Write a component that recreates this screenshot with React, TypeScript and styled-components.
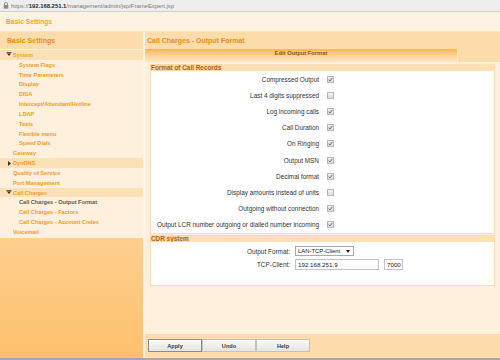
import React from "react";
import styled, { createGlobalStyle } from "styled-components";

const Global = createGlobalStyle`
  html, body { margin: 0; padding: 0; }
  body {
    width: 500px; height: 360px; overflow: hidden;
    font-family: "Liberation Sans", Arial, sans-serif;
    background: #fef0dc;
  }
  * { box-sizing: border-box; }
`;

const Page = styled.div`
  width: 500px;
  height: 360px;
  display: flex;
  flex-direction: column;
`;

const UrlBar = styled.div`
  height: 12px;
  flex: none;
  background: #eeeeee;
  border-bottom: 1px solid #c9d2dc;
  display: flex;
  align-items: center;
  padding-left: 3px;
  gap: 2px;
`;

const Url = styled.span`
  font-size: 5.9px;
  color: #7a7a7a;
  white-space: nowrap;
  b { color: #2a2a2a; font-weight: bold; }
`;

const TopHeader = styled.div`
  height: 20px;
  flex: none;
  background: #fef2e2;
  border-bottom: 1px solid #fde3c0;
  display: flex;
  align-items: center;
  padding-left: 6px;
  font-size: 6.7px;
  font-weight: bold;
  color: #f7a430;
`;

const Body = styled.div`
  flex: 1;
  display: flex;
  min-height: 0;
`;

const Sidebar = styled.div`
  width: 145px;
  flex: none;
  display: flex;
  flex-direction: column;
  border-right: 2px solid #fef3e4;
`;

const HeaderBar = styled.div`
  height: 17px;
  flex: none;
  background: #fddcab;
  display: flex;
  align-items: center;
  font-size: 7px;
  font-weight: bold;
  color: #f28a14;
`;

const SideHeader = styled(HeaderBar)`
  padding-left: 7px;
`;

const Menu = styled.div`
  background: #fef0dc;
  padding-top: 1px;
  padding-bottom: 1px;
  flex: none;
`;

const MenuItem = styled.div<{ $level: number; $group?: boolean; $active?: boolean }>`
  height: 9.83px;
  display: flex;
  align-items: center;
  padding-left: ${(p) => (p.$level === 2 ? 19 : p.$group ? 6 : 13)}px;
  background: ${(p) => (p.$group ? "#fde1b6" : "transparent")};
  font-size: 5.6px;
  font-weight: bold;
  color: ${(p) => (p.$active ? "#6a5638" : "#f39a24")};
  white-space: nowrap;
`;

const Arrow = styled.span`
  display: inline-block;
  width: 7px;
  height: 5px;
  svg { display: block; }
`;

const SideFill = styled.div`
  flex: 1;
  background: linear-gradient(#fecf8f, #fec06c);
`;

const Main = styled.div`
  flex: 1;
  display: flex;
  flex-direction: column;
  min-width: 0;
`;

const MainTitle = styled(HeaderBar)`
  padding-left: 2px;
`;

const TabRow = styled.div`
  height: 13px;
  flex: none;
  background: #fddcab;
  display: flex;
`;

const Tab = styled.div`
  width: 313px;
  background: linear-gradient(#fdb356, #fed49a 55%, #fee8c8);
  border-right: 1px solid #fde8cc;
  display: flex;
  justify-content: center;
  padding-top: 1px;
  font-size: 5.8px;
  font-weight: bold;
  color: #8c5a14;
`;

const Content = styled.div`
  flex: 1;
  background: #fef0dc;
  padding: 2px 5px 0 5px;
  display: flex;
  flex-direction: column;
  gap: 1px;
`;

const Fieldset = styled.div`
  display: flex;
  flex-direction: column;
`;

const LegendBand = styled.div`
  height: 7px;
  background: #fde0b6;
  display: flex;
`;

const Legend = styled.span`
  background: #fdd7a2;
  font-size: 6.4px;
  font-weight: bold;
  color: #a8651a;
  line-height: 7px;
  padding: 0 1px 0 1px;
  white-space: nowrap;
`;

const FieldBody = styled.div<{ $labelWidth: number; $rowHeight: number; $pad: string }>`
  background: #ffffff;
  border: 1px solid #fddcb2;
  border-top: none;
  display: grid;
  grid-template-columns: ${(p) => p.$labelWidth}px 1fr;
  grid-auto-rows: ${(p) => p.$rowHeight}px;
  padding: ${(p) => p.$pad};
  align-items: center;
`;

const Label = styled.span`
  font-size: 6.4px;
  color: #333333;
  text-align: right;
  white-space: nowrap;
`;

const CheckCell = styled.div`
  padding-left: 8px;
  display: flex;
  align-items: center;
`;

const Box = styled.span`
  width: 7px;
  height: 7px;
  border: 1px solid #b9b9bd;
  background: linear-gradient(#f2f2f2, #dcdce0);
  display: flex;
  align-items: center;
  justify-content: center;
  svg { display: block; }
`;

const CtrlCell = styled.div`
  padding-left: 5px;
  display: flex;
  align-items: center;
  gap: 5px;
`;

const Select = styled.div`
  width: 59px;
  height: 10px;
  border: 1px solid #a9a9a9;
  background: #fff;
  display: flex;
  align-items: center;
  justify-content: space-between;
  padding: 0 3px 0 2px;
  font-size: 5.9px;
  color: #222;
  white-space: nowrap;
`;

const Input = styled.div<{ $w: number }>`
  width: ${(p) => p.$w}px;
  height: 11px;
  border: 1px solid #c4c4c4;
  background: #fff;
  display: flex;
  align-items: center;
  padding-left: 2px;
  font-size: 6.2px;
  color: #222;
`;

const ButtonBar = styled.div`
  height: 24px;
  flex: none;
  background: #fddcab;
  display: flex;
  align-items: center;
  padding-left: 3px;
  padding-bottom: 1px;
`;

const Button = styled.div<{ $primary?: boolean }>`
  width: 54px;
  height: 13px;
  border: 1px solid ${(p) => (p.$primary ? "#8c8c8c" : "#c2c2c2")};
  background: linear-gradient(#fafafa, #e4e4e4);
  display: flex;
  align-items: center;
  justify-content: center;
  font-size: 5.6px;
  font-weight: bold;
  color: #3a3a3a;
`;

const BottomLine = styled.div`
  height: 2px;
  flex: none;
  background: #a8a8a8;
`;

const Lock = () => (
  <svg width="6" height="7" viewBox="0 0 6 7">
    <path d="M1.5 3V2a1.5 1.5 0 0 1 3 0v1" fill="none" stroke="#8a8a8a" strokeWidth="0.9" />
    <rect x="0.7" y="3" width="4.6" height="3.6" fill="#8a8a8a" />
  </svg>
);

const Tri = ({ open }: { open: boolean }) => (
  <Arrow>
    <svg width="7" height="5" viewBox="0 0 7 5">
      {open ? (
        <>
          <rect x="0.5" y="0.3" width="5" height="1" fill="#333" />
          <path d="M1 1.5h4L3 4z" fill="#333" />
        </>
      ) : (
        <path d="M2 0v5l3-2.5z" fill="#333" />
      )}
    </svg>
  </Arrow>
);

const Check = () => (
  <svg width="5" height="5" viewBox="0 0 5 5">
    <path d="M0.8 2.6l1.2 1.4L4.3 0.8" fill="none" stroke="#4e5f96" strokeWidth="0.9" />
  </svg>
);

type Item = { label: string; level: number; group?: "open" | "closed"; active?: boolean };

const menu: Item[] = [
  { label: "System", level: 0, group: "open" },
  { label: "System Flags", level: 2 },
  { label: "Time Parameters", level: 2 },
  { label: "Display", level: 2 },
  { label: "DISA", level: 2 },
  { label: "Intercept/Attendant/Hotline", level: 2 },
  { label: "LDAP", level: 2 },
  { label: "Texts", level: 2 },
  { label: "Flexible menu", level: 2 },
  { label: "Speed Dials", level: 2 },
  { label: "Gateway", level: 1 },
  { label: "DynDNS", level: 0, group: "closed" },
  { label: "Quality of Service", level: 1 },
  { label: "Port Management", level: 1 },
  { label: "Call Charges", level: 0, group: "open" },
  { label: "Call Charges - Output Format", level: 2, active: true },
  { label: "Call Charges - Factors", level: 2 },
  { label: "Call Charges - Account Codes", level: 2 },
  { label: "Voicemail", level: 1 },
];

const options: [string, boolean][] = [
  ["Compressed Output", true],
  ["Last 4 digits suppressed", false],
  ["Log incoming calls", true],
  ["Call Duration", true],
  ["On Ringing", true],
  ["Output MSN", true],
  ["Decimal format", true],
  ["Display amounts instead of units", false],
  ["Outgoing without connection", true],
  ["Output LCR number outgoing or dialled number incoming", true],
];

export default function App() {
  return (
    <Page>
      <Global />
      <UrlBar>
        <Lock />
        <Url>
          https://<b>192.168.251.1</b>/management/admin/jsp/FrameExpert.jsp
        </Url>
      </UrlBar>
      <TopHeader>Basic Settings</TopHeader>
      <Body>
        <Sidebar>
          <SideHeader>Basic Settings</SideHeader>
          <Menu>
            {menu.map((m) => (
              <MenuItem key={m.label} $level={m.level} $group={!!m.group} $active={m.active}>
                {m.group && <Tri open={m.group === "open"} />}
                {m.label}
              </MenuItem>
            ))}
          </Menu>
          <SideFill />
        </Sidebar>
        <Main>
          <MainTitle>Call Charges - Output Format</MainTitle>
          <TabRow>
            <Tab>Edit Output Format</Tab>
          </TabRow>
          <Content>
            <Fieldset>
              <LegendBand>
                <Legend>Format of Call Records</Legend>
              </LegendBand>
              <FieldBody $labelWidth={168} $rowHeight={16.2} $pad="0 0 0 0">
                {options.map(([label, on]) => (
                  <React.Fragment key={label}>
                    <Label>{label}</Label>
                    <CheckCell>
                      <Box>{on && <Check />}</Box>
                    </CheckCell>
                  </React.Fragment>
                ))}
              </FieldBody>
            </Fieldset>
            <Fieldset>
              <LegendBand>
                <Legend>CDR system</Legend>
              </LegendBand>
              <FieldBody $labelWidth={139} $rowHeight={13} $pad="3px 0 14px 0">
                <Label>Output Format:</Label>
                <CtrlCell>
                  <Select>
                    <span>LAN-TCP-Client</span>
                    <svg width="4" height="3" viewBox="0 0 4 3">
                      <path d="M0 0h4L2 3z" fill="#222" />
                    </svg>
                  </Select>
                </CtrlCell>
                <Label>TCP-Client:</Label>
                <CtrlCell>
                  <Input $w={84}>192.168.251.9</Input>
                  <Input $w={19}>7000</Input>
                </CtrlCell>
              </FieldBody>
            </Fieldset>
          </Content>
          <ButtonBar>
            <Button $primary>Apply</Button>
            <Button>Undo</Button>
            <Button>Help</Button>
          </ButtonBar>
        </Main>
      </Body>
      <BottomLine />
    </Page>
  );
}
